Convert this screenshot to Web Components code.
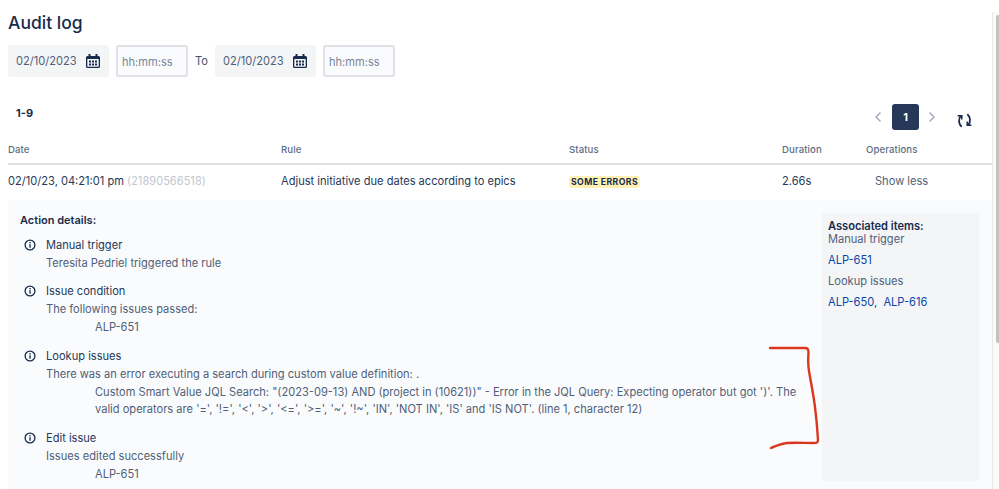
<!DOCTYPE html>
<html>
<head>
<meta charset="utf-8">
<style>
    html, body { margin: 0; height: 100%; overflow: hidden; background: #fff; }
    body { font-family: Inter, "Liberation Sans", sans-serif; color: #172b4d; font-size: 11.1px; }
</style>
</head>
<body>
<audit-page></audit-page>

<script>
const calendarIcon = `<svg width="16" height="16" viewBox="0 0 16 16">
    <path fill="#172b4d" d="M3.500 1h2v2h5V1h2v2h1A1.500 1.500 0 0 1 15 4.500v9a1.500 1.500 0 0 1-1.500 1.500h-11A1.500 1.500 0 0 1 1 13.500v-9A1.500 1.500 0 0 1 2.500 3h1z"/>
    <rect x="2.300" y="6" width="11.400" height="7.700" rx=".5" fill="#f4f5f7"/>
    <g fill="#172b4d"><rect x="4" y="7.500" width="2" height="2"/><rect x="7" y="7.500" width="2" height="2"/><rect x="10" y="7.500" width="2" height="2"/><rect x="4" y="10.500" width="2" height="2"/><rect x="7" y="10.500" width="2" height="2"/><rect x="10" y="10.500" width="2" height="2"/></g>
</svg>`;

class DateField extends HTMLElement {
    constructor(){
        super();
        this.attachShadow({ mode: 'open' });
        this.shadowRoot.innerHTML = `
            <style>
                :host {
                    display: flex;
                    align-items: center;
                    justify-content: space-between;
                    width: 101px;
                    height: 32px;
                    box-sizing: border-box;
                    padding: 0 8px;
                    background: #f4f5f7;
                    border-radius: 3px;
                    color: #505f79;
                }
                svg { display: block; }
            </style>
            <slot></slot>${calendarIcon}
        `;
    }
}

class TimeField extends HTMLElement {
    constructor(){
        super();
        this.attachShadow({ mode: 'open' });
        this.shadowRoot.innerHTML = `
            <style>
                :host {
                    display: flex;
                    align-items: center;
                    width: 72px;
                    height: 32px;
                    box-sizing: border-box;
                    padding: 1px 0 0 4px;
                    background: #fafbfc;
                    border: 2px solid #dfe1e6;
                    border-radius: 3px;
                    color: #7a869a;
                }
            </style>
            <slot></slot>
        `;
    }
}

class Pager extends HTMLElement {
    constructor(){
        super();
        this.attachShadow({ mode: 'open' });
        this.shadowRoot.innerHTML = `
            <style>
                :host { display: flex; align-items: center; }
                .current {
                    width: 27px;
                    height: 26px;
                    margin: 0 9px 0 10px;
                    display: flex;
                    align-items: center;
                    justify-content: center;
                    background: #253858;
                    color: #fff;
                    border-radius: 3px;
                    font-weight: 700;
                    font-size: 11px;
                }
                svg { display: block; }
                .refresh { margin-left: 21px; margin-top: 6px; }
            </style>
            <svg width="8" height="12" viewBox="0 0 8 12"><path d="M6.500 1.500 2 6l4.500 4.500" fill="none" stroke="#a5adba" stroke-width="1.500"/></svg>
            <div class="current">1</div>
            <svg width="8" height="12" viewBox="0 0 8 12"><path d="M1.500 1.500 6 6l-4.500 4.500" fill="none" stroke="#a5adba" stroke-width="1.500"/></svg>
            <svg class="refresh" width="15" height="15" viewBox="0 0 15 15" fill="none" stroke="#172b4d" stroke-width="1.800">
                <path d="M4.700 13.800C1.800 11.500.9 6.800 3.800 2.400"/><path d="M.6 2.800h4.200v3.600" stroke-width="1.500"/>
                <path d="M10.300 1.200c2.900 2.300 3.800 7 .9 11.400"/><path d="M14.400 12.200h-4.200V8.600" stroke-width="1.500"/>
            </svg>
        `;
    }
}

class LogColumns extends HTMLElement {
    constructor(){
        super();
        this.attachShadow({ mode: 'open' });
        this.shadowRoot.innerHTML = `
            <style>
                :host {
                    display: grid;
                    grid-template-columns: 273px 288px 213px 84px 1fr;
                    align-items: center;
                    box-sizing: border-box;
                }
            </style>
            <slot></slot>
        `;
    }
}

class StatusLozenge extends HTMLElement {
    constructor(){
        super();
        this.attachShadow({ mode: 'open' });
        this.shadowRoot.innerHTML = `
            <style>
                :host {
                    display: inline-block;
                    padding: 0 2px;
                    background: #fff0b3;
                    color: #172b4d;
                    border-radius: 3px;
                    font-size: 8.700px;
                    font-weight: 700;
                    line-height: 12px;
                    letter-spacing: .4px;
                    vertical-align: middle;
                }
            </style>
            <slot></slot>
        `;
    }
}

class ActionItem extends HTMLElement {
    constructor(){
        super();
        this.attachShadow({ mode: 'open' });
        this.shadowRoot.innerHTML = `
            <style>
                :host {
                    display: grid;
                    grid-template-columns: 12px 1fr;
                    column-gap: 10px;
                    margin-left: 4px;
                    line-height: 18px;
                }
                svg { display: block; margin-top: 3px; }
                .title { color: #253858; }
                .body { color: #505f79; }
            </style>
            <svg width="12" height="12" viewBox="0 0 12 12" fill="none">
                <circle cx="6" cy="6" r="4.900" stroke="#172b4d" stroke-width="1.300"/>
                <rect x="5.400" y="5.200" width="1.300" height="3.500" fill="#172b4d"/>
                <rect x="5.400" y="3" width="1.300" height="1.400" fill="#172b4d"/>
            </svg>
            <div>
                <div class="title"><slot name="title"></slot></div>
                <div class="body"><slot></slot></div>
            </div>
        `;
    }
}

class AuditPage extends HTMLElement {
    constructor(){
        super();
        this.attachShadow({ mode: 'open' });
        this.shadowRoot.innerHTML = `
            <style>
                :host {
                    display: block;
                    position: relative;
                    width: 999px;
                    height: 489px;
                    overflow: hidden;
                }
                main { width: 985px; padding-left: 8px; }
                h1 {
                    margin: 0;
                    padding-top: 11px;
                    font-size: 17.500px;
                    line-height: 24px;
                    font-weight: 500;
                    color: #172b4d;
                }
                .filters { display: flex; align-items: center; margin-top: 10px; height: 32px; }
                time-field { margin-left: 7px; }
                .to { margin: 0 7px; color: #42526e; }
                .paging {
                    display: flex;
                    justify-content: space-between;
                    align-items: center;
                    height: 26px;
                    margin-top: 27px;
                    padding-left: 8px;
                    width: 964px;
                    box-sizing: border-box;
                }
                .paging b { font-size: 11px; font-weight: 700; margin-top: -8px; }
                .head {
                    height: 27px;
                    padding-bottom: 2px;
                    border-bottom: 2px solid #dfe1e6;
                    margin-top: 8px;
                    font-size: 9.600px;
                    font-weight: 500;
                    color: #5e6c84;
                    letter-spacing: .1px;
                }
                .row { height: 35px; padding-bottom: 3px; color: #253858; }
                .row .muted { color: #c1c7d0; }
                .row .op { color: #505f79; padding-left: 9px; }
                .details {
                    display: flex;
                    justify-content: space-between;
                    background: #fafbfc;
                    height: 289px;
                    padding: 13px 14px 0 12px;
                    box-sizing: border-box;
                }
                .log { width: 790px; }
                .log h4 {
                    margin: 0 0 9px;
                    font-size: 11px;
                    line-height: 14px;
                    font-weight: 600;
                    color: #172b4d;
                }
                action-item { margin-bottom: 10px; }
                .indent { padding-left: 49px; margin-top: 1px; line-height: 17.500px; }
                .assoc {
                    width: 157px;
                    height: 268px;
                    box-sizing: border-box;
                    background: #f4f5f7;
                    padding: 7px 6px 6px;
                    color: #505f79;
                    line-height: 14px;
                }
                .assoc b { display: block; font-weight: 600; color: #172b4d; line-height: 12px; }
                .assoc p { margin: 0; }
                .assoc .links { color: #0747a6; margin: 7px 0; }
                .scrollbar {
                    position: absolute;
                    top: 12px;
                    right: 0;
                    bottom: 0;
                    width: 6px;
                    background: #fafafa;
                    border-left: 1px solid #e8e8e8;
                }
                .thumb { position: absolute; top: 3px; left: 3px; right: 0; height: 328px; background: #c2c2c2; border-radius: 2px 0 0 2px; }
                .marker { position: absolute; left: 768px; top: 345px; }
            </style>
            <main>
                <h1>Audit log</h1>
                <div class="filters">
                    <date-field>02/10/2023</date-field>
                    <time-field>hh:mm:ss</time-field>
                    <span class="to">To</span>
                    <date-field>02/10/2023</date-field>
                    <time-field>hh:mm:ss</time-field>
                </div>
                <div class="paging">
                    <b>1-9</b>
                    <audit-pager></audit-pager>
                </div>
                <log-columns class="head">
                    <span>Date</span><span>Rule</span><span>Status</span><span>Duration</span><span>Operations</span>
                </log-columns>
                <log-columns class="row">
                    <span>02/10/23, 04:21:01 pm <span class="muted">(21890566518)</span></span>
                    <span>Adjust initiative due dates according to epics</span>
                    <span><status-lozenge>SOME ERRORS</status-lozenge></span>
                    <span>2.66s</span>
                    <span class="op">Show less</span>
                </log-columns>
                <section class="details">
                    <div class="log">
                        <h4>Action details:</h4>
                        <action-item>
                            <span slot="title">Manual trigger</span>
                            Teresita Pedriel triggered the rule
                        </action-item>
                        <action-item>
                            <span slot="title">Issue condition</span>
                            The following issues passed:
                            <div class="indent">ALP-651</div>
                        </action-item>
                        <action-item>
                            <span slot="title">Lookup issues</span>
                            There was an error executing a search during custom value definition: .
                            <div class="indent">Custom Smart Value JQL Search: "(2023-09-13) AND (project in (10621))" - Error in the JQL Query: Expecting operator but got ')'. The valid operators are '=', '!=', '&lt;', '&gt;', '&lt;=', '&gt;=', '~', '!~', 'IN', 'NOT IN', 'IS' and 'IS NOT'. (line 1, character 12)</div>
                        </action-item>
                        <action-item>
                            <span slot="title">Edit issue</span>
                            Issues edited successfully
                            <div class="indent">ALP-651</div>
                        </action-item>
                    </div>
                    <aside class="assoc">
                        <b>Associated items:</b>
                        <p>Manual trigger</p>
                        <p class="links">ALP-651</p>
                        <p>Lookup issues</p>
                        <p class="links">ALP-650,&nbsp; ALP-616</p>
                    </aside>
                </section>
            </main>
            <svg class="marker" width="54" height="106" viewBox="0 0 54 106" fill="none">
                <path d="M2 3C14 3 26 3 37 3C39.500 3 40.500 4.500 40.500 7C40 14 40 20 41 26C43 38 45.500 50 47 62C48.500 74 49.500 86 50 95C50 97.500 49 98 46 98C37 98 28 97.500 19 98C13 98.500 8 101 3 103" stroke="#d9381e" stroke-width="2.400" stroke-linecap="round" stroke-linejoin="round"/>
            </svg>
            <div class="scrollbar"><div class="thumb"></div></div>
        `;
    }
}

customElements.define('date-field', DateField);
customElements.define('time-field', TimeField);
customElements.define('audit-pager', Pager);
customElements.define('log-columns', LogColumns);
customElements.define('status-lozenge', StatusLozenge);
customElements.define('action-item', ActionItem);
customElements.define('audit-page', AuditPage);
</script>
</body>
</html>
